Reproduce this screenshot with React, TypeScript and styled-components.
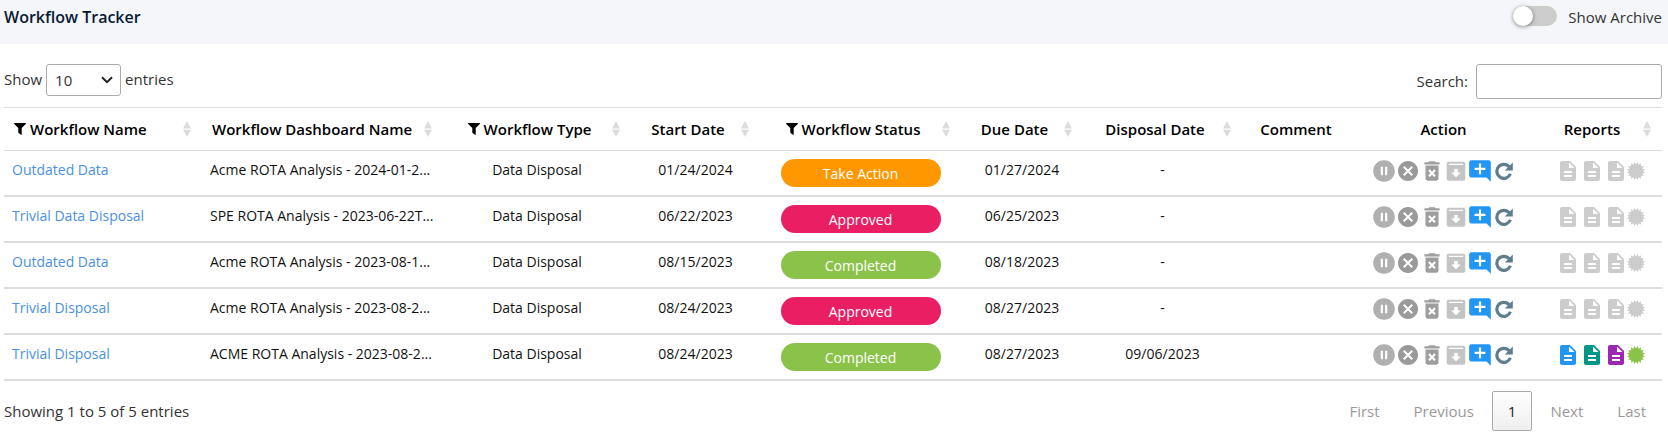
import React, { useState } from 'react';
import styled, { createGlobalStyle, css } from 'styled-components';
import {
  MdAddComment,
  MdCancel,
  MdDeleteForever,
  MdDescription,
  MdPauseCircleFilled,
} from 'react-icons/md';

type Status = 'Take Action' | 'Approved' | 'Completed';

interface Workflow {
  name: string;
  dashboard: string;
  type: string;
  start: string;
  status: Status;
  due: string;
  disposal: string;
  reportsReady?: boolean;
}

interface Column {
  label: string;
  width: number;
  align?: 'left' | 'center';
  filter?: boolean;
  sort?: boolean;
}

const columns: Column[] = [
  { label: 'Workflow Name', width: 198, align: 'left', filter: true, sort: true },
  { label: 'Workflow Dashboard Name', width: 241, align: 'left', sort: true },
  { label: 'Workflow Type', width: 188, filter: true, sort: true },
  { label: 'Start Date', width: 129, sort: true },
  { label: 'Workflow Status', width: 201, filter: true, sort: true },
  { label: 'Due Date', width: 122, sort: true },
  { label: 'Disposal Date', width: 159, sort: true },
  { label: 'Comment', width: 108 },
  { label: 'Action', width: 187 },
  { label: 'Reports', width: 125, sort: true },
];

const workflows: Workflow[] = [
  { name: 'Outdated Data', dashboard: 'Acme ROTA Analysis - 2024-01-2...', type: 'Data Disposal', start: '01/24/2024', status: 'Take Action', due: '01/27/2024', disposal: '-' },
  { name: 'Trivial Data Disposal', dashboard: 'SPE ROTA Analysis - 2023-06-22T...', type: 'Data Disposal', start: '06/22/2023', status: 'Approved', due: '06/25/2023', disposal: '-' },
  { name: 'Outdated Data', dashboard: 'Acme ROTA Analysis - 2023-08-1...', type: 'Data Disposal', start: '08/15/2023', status: 'Completed', due: '08/18/2023', disposal: '-' },
  { name: 'Trivial Disposal', dashboard: 'Acme ROTA Analysis - 2023-08-2...', type: 'Data Disposal', start: '08/24/2023', status: 'Approved', due: '08/27/2023', disposal: '-' },
  { name: 'Trivial Disposal', dashboard: 'ACME ROTA Analysis - 2023-08-2...', type: 'Data Disposal', start: '08/24/2023', status: 'Completed', due: '08/27/2023', disposal: '09/06/2023', reportsReady: true },
];

const statusColor: Record<Status, string> = {
  'Take Action': '#ff9800',
  Approved: '#e91e63',
  Completed: '#8bc34a',
};

const GlobalStyle = createGlobalStyle`
  *, *::before, *::after { box-sizing: border-box; }
  body {
    margin: 0;
    background: #fff;
    color: #333;
    font: 400 15px/22px 'Open Sans', 'Noto Sans', sans-serif;
  }
  button, input, select { font: inherit; color: inherit; }
`;

const Header = styled.header`
  display: flex;
  justify-content: space-between;
  align-items: flex-start;
  height: 44px;
  padding: 6px 6px 0 4px;
  background: #f4f6fa;
`;

const Title = styled.h1`
  margin: 0;
  font-size: 16px;
  font-weight: 600;
  line-height: 22px;
  color: #0b1a33;
`;

const ArchiveToggle = styled.label`
  display: flex;
  gap: 11px;
  line-height: 22px;
  cursor: pointer;
`;

const Switch = styled.input`
  appearance: none;
  display: flex;
  width: 44px;
  height: 20px;
  margin: 0;
  border-radius: 10px;
  background: #ccc;
  cursor: pointer;

  &::before {
    content: '';
    width: 20px;
    height: 20px;
    border-radius: 50%;
    background: #fff;
    box-shadow: 0 1px 4px rgba(0, 0, 0, 0.45);
  }

  &:checked {
    justify-content: flex-end;
    background: #2196f3;
  }
`;

const Content = styled.main`
  padding: 20px 6px 0 4px;
`;

const Toolbar = styled.div`
  display: flex;
  justify-content: space-between;
  align-items: flex-start;
  padding-bottom: 8px;
`;

const LengthLabel = styled.label`
  display: flex;
  align-items: flex-start;
  gap: 4px;
  line-height: 30px;
`;

const SelectBox = styled.span`
  display: grid;
  align-items: center;

  > * { grid-area: 1 / 1; }

  svg {
    justify-self: end;
    margin-right: 8px;
    pointer-events: none;
  }
`;

const LengthSelect = styled.select`
  appearance: none;
  width: 75px;
  height: 32px;
  padding: 0 8px;
  border: 1px solid #aaa;
  border-radius: 3px;
  background: transparent;
  line-height: 28px;
`;

const SearchLabel = styled.label`
  display: flex;
  align-items: flex-start;
  gap: 8px;
  line-height: 34px;
`;

const SearchInput = styled.input`
  width: 186px;
  height: 35px;
  padding: 5px;
  border: 1px solid #aaa;
  border-radius: 3px;
  background: transparent;
`;

const TableScroller = styled.div`
  overflow-x: auto;
`;

const Table = styled.table`
  width: 100%;
  table-layout: fixed;
  border-spacing: 0;
  border-top: 1px solid #ddd;
  color: #111;
`;

const Col = styled.col<{ $width: number }>`
  width: ${({ $width }) => $width}px;
`;

const HeadCell = styled.th<{ $align: 'left' | 'center'; $sort: boolean }>`
  height: 43px;
  padding: 0 ${({ $sort }) => ($sort ? 11 : 10)}px 0 10px;
  border-bottom: 1px solid #ddd;
  color: #000;
  font-weight: 600;
  white-space: nowrap;
  ${({ $sort }) => $sort && css`cursor: pointer;`}

  > div {
    display: flex;
    align-items: center;
    gap: 6px;
  }

  span {
    flex: 1;
    display: flex;
    align-items: center;
    justify-content: ${({ $align }) => ($align === 'left' ? 'flex-start' : 'center')};
    gap: 4px;
  }
`;

const Cell = styled.td<{ $align?: 'left' | 'center' }>`
  height: 46px;
  padding: 8px;
  border-bottom: 2px solid #ddd;
  text-align: ${({ $align = 'center' }) => $align};
  vertical-align: top;
  white-space: nowrap;
  font-size: 14px;
`;

const WorkflowLink = styled.a`
  color: #4a90e2;
  text-decoration: none;
`;

const Badge = styled.button<{ $color: string }>`
  display: block;
  width: 160px;
  height: 28px;
  margin: 0 auto;
  padding: 2px 0 0;
  border: 0;
  border-radius: 14px;
  background: ${({ $color }) => $color};
  color: #fff;
  line-height: 22px;
  cursor: pointer;
`;

const IconRow = styled.div`
  display: flex;
  justify-content: center;
`;

const IconButton = styled.button<{ $color: string; $narrow?: boolean }>`
  display: flex;
  align-items: center;
  justify-content: center;
  width: ${({ $narrow }) => ($narrow ? 16 : 24)}px;
  height: 24px;
  padding: 0;
  border: 0;
  background: none;
  color: ${({ $color }) => $color};
  cursor: pointer;

  svg { flex: none; }
`;

const Footer = styled.footer`
  display: flex;
  justify-content: space-between;
  align-items: center;
  padding: 10px 0 4px;
`;

const Pagination = styled.nav`
  display: flex;
  gap: 2px;
`;

const PageButton = styled.button<{ $current?: boolean }>`
  min-width: 40px;
  height: 40px;
  padding: 0 15px;
  border: 1px solid transparent;
  border-radius: 2px;
  background: none;
  color: #999;

  ${({ $current }) =>
    $current &&
    css`
      border-color: #aaa;
      background: linear-gradient(#fff, #efefef);
      color: #222;
    `}
`;

const FilterIcon = () => (
  <svg width="12" height="12" viewBox="0 0 12 12" fill="currentColor" aria-hidden="true">
    <path d="M.6 0h10.8c.6 0 .8.6.4 1L7.7 5v6.5c0 .4-.4.6-.7.3L4.6 10c-.2-.1-.3-.3-.3-.5V5L.2 1C-.2.6.1 0 .6 0z" />
  </svg>
);

const SortIcon = () => (
  <svg width="8" height="16" viewBox="0 0 8 16" fill="#dcdcdc" aria-hidden="true">
    <path d="M4 0l4 7.4H0zM4 16l4-7.2H0z" />
  </svg>
);

const ChevronIcon = () => (
  <svg width="12" height="8" viewBox="0 0 12 8" fill="none" stroke="#222" strokeWidth="2" aria-hidden="true">
    <path d="M1 1.2l5 5 5-5" />
  </svg>
);

const ArchiveIcon = () => (
  <svg width="20" height="20" viewBox="0 0 20 20" aria-hidden="true">
    <rect x="0.7" y="0.8" width="18.6" height="19" rx="2" fill="currentColor" />
    <path d="M2.8 2.7h14.4v1.2H2.8zM8.2 8h3.6v3.4h3L10 16.2l-4.8-4.8h3z" fill="#fff" />
  </svg>
);

const RefreshIcon = () => (
  <svg width="18" height="18" viewBox="0 0 18 18" aria-hidden="true">
    <path d="M14.2 4.8A7 7 0 1 0 15.4 11.8" fill="none" stroke="currentColor" strokeWidth="3.2" />
    <path d="M17.8 0.4v8h-8z" fill="currentColor" />
  </svg>
);

const burstPoints = Array.from({ length: 32 }, (_, i) => {
  const radius = i % 2 ? 9.2 : 6.8;
  const angle = (i * Math.PI) / 16;
  return `${(9 + radius * Math.sin(angle)).toFixed(2)},${(9 - radius * Math.cos(angle)).toFixed(2)}`;
}).join(' ');

const BurstIcon = () => (
  <svg width="18" height="18" viewBox="0 0 18 18" fill="currentColor" aria-hidden="true">
    <polygon points={burstPoints} />
  </svg>
);

const actions = [
  { label: 'Pause', color: '#b0b0b0', icon: <MdPauseCircleFilled size={26} /> },
  { label: 'Cancel', color: '#9a9a9a', icon: <MdCancel size={24} /> },
  { label: 'Delete', color: '#9e9e9e', icon: <MdDeleteForever size={26} /> },
  { label: 'Archive', color: '#c4c4c4', icon: <ArchiveIcon /> },
  { label: 'Add comment', color: '#2196f3', icon: <MdAddComment size={26} /> },
  { label: 'Refresh', color: '#607d8b', icon: <RefreshIcon /> },
];

const reports = [
  { label: 'Summary report', color: '#2196f3' },
  { label: 'Detail report', color: '#009688' },
  { label: 'Disposal report', color: '#9c27b0' },
];

const WorkflowRow = ({ item }: { item: Workflow }) => (
  <tr>
    <Cell $align="left">
      <WorkflowLink href="#">{item.name}</WorkflowLink>
    </Cell>
    <Cell $align="left">{item.dashboard}</Cell>
    <Cell>{item.type}</Cell>
    <Cell>{item.start}</Cell>
    <Cell>
      <Badge type="button" $color={statusColor[item.status]}>{item.status}</Badge>
    </Cell>
    <Cell>{item.due}</Cell>
    <Cell>{item.disposal}</Cell>
    <Cell />
    <Cell>
      <IconRow>
        {actions.map((action) => (
          <IconButton key={action.label} type="button" aria-label={action.label} $color={action.color}>
            {action.icon}
          </IconButton>
        ))}
      </IconRow>
    </Cell>
    <Cell>
      <IconRow>
        {reports.map((report) => (
          <IconButton
            key={report.label}
            type="button"
            aria-label={report.label}
            $color={item.reportsReady ? report.color : '#ccc'}
          >
            <MdDescription size={24} />
          </IconButton>
        ))}
        <IconButton type="button" aria-label="Certificate" $narrow $color={item.reportsReady ? '#8bc34a' : '#ccc'}>
          <BurstIcon />
        </IconButton>
      </IconRow>
    </Cell>
  </tr>
);

export default function App() {
  const [archive, setArchive] = useState(false);
  const [search, setSearch] = useState('');
  const visible = workflows.filter((w) =>
    `${w.name} ${w.dashboard} ${w.status}`.toLowerCase().includes(search.toLowerCase()),
  );

  return (
    <>
      <GlobalStyle />
      <Header>
        <Title>Workflow Tracker</Title>
        <ArchiveToggle>
          <Switch type="checkbox" role="switch" checked={archive} onChange={(e) => setArchive(e.target.checked)} />
          Show Archive
        </ArchiveToggle>
      </Header>
      <Content>
        <Toolbar>
          <LengthLabel>
            Show
            <SelectBox>
              <LengthSelect defaultValue="10">
                <option>10</option>
                <option>25</option>
                <option>50</option>
                <option>100</option>
              </LengthSelect>
              <ChevronIcon />
            </SelectBox>
            entries
          </LengthLabel>
          <SearchLabel>
            Search:
            <SearchInput type="search" value={search} onChange={(e) => setSearch(e.target.value)} />
          </SearchLabel>
        </Toolbar>
        <TableScroller>
          <Table>
            <colgroup>
              {columns.map((column) => (
                <Col key={column.label} $width={column.width} />
              ))}
            </colgroup>
            <thead>
              <tr>
                {columns.map(({ label, align = 'center', filter, sort = false }) => (
                  <HeadCell key={label} scope="col" $align={align} $sort={sort}>
                    <div>
                      <span>
                        {filter && <FilterIcon />}
                        {label}
                      </span>
                      {sort && <SortIcon />}
                    </div>
                  </HeadCell>
                ))}
              </tr>
            </thead>
            <tbody>
              {visible.map((item, index) => (
                <WorkflowRow key={index} item={item} />
              ))}
            </tbody>
          </Table>
        </TableScroller>
        <Footer>
          <div>Showing 1 to 5 of 5 entries</div>
          <Pagination aria-label="Pages">
            <PageButton type="button">First</PageButton>
            <PageButton type="button">Previous</PageButton>
            <PageButton type="button" $current aria-current="page">1</PageButton>
            <PageButton type="button">Next</PageButton>
            <PageButton type="button">Last</PageButton>
          </Pagination>
        </Footer>
      </Content>
    </>
  );
}
